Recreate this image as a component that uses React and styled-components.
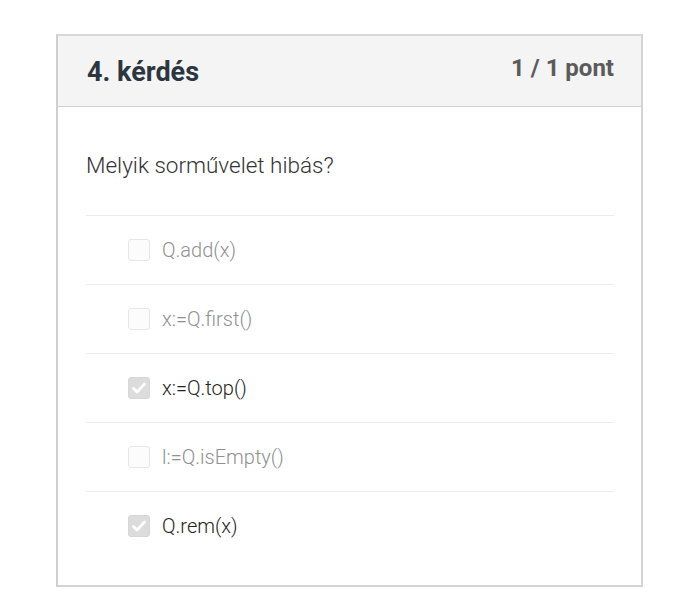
import styled, { createGlobalStyle } from 'styled-components';

const GlobalStyle = createGlobalStyle`
    body {
        margin: 0;
        background: #ffffff;
        font-family: Roboto, 'Liberation Sans', sans-serif;
    }
`;

const Page = styled.div`
    padding: 34px 0 0 56px;
`;

const Card = styled.div`
    width: 583px;
    height: 549px;
    border: 2px solid #d4d4d4;
    border-top-color: #d9d9d9;
    border-left-color: #cfcfcf;
    background: #ffffff;
    display: flex;
    flex-direction: column;
`;

const Header = styled.div`
    display: flex;
    justify-content: space-between;
    align-items: flex-start;
    height: 70px;
    background: #f4f4f4;
    border-bottom: 1px solid #d0d0d0;
    padding: 0 27px 0 29px;
`;

const Title = styled.h3`
    margin: 0;
    padding-top: 20px;
    font-size: 27px;
    font-weight: 700;
    color: #2c3641;
`;

const Points = styled.div`
    padding-top: 18px;
    font-size: 24px;
    font-weight: 700;
    color: #5b5b5b;
`;

const Body = styled.div`
    padding: 0 27px 0 28px;
`;

const Question = styled.p`
    margin: 0;
    padding: 44px 0 36px;
    font-size: 22.5px;
    font-weight: 300;
    color: #333;
    line-height: 28px;
`;

const Option = styled.label`
    display: flex;
    align-items: center;
    gap: 12px;
    height: 68px;
    border-top: 1px solid #ececec;
    padding-left: 42px;
    font-size: 20px;
    font-weight: 300;
    color: ${p => (p.checked ? '#222' : '#8f8f8f')};
`;

const Box = styled.span`
    width: 20px;
    height: 20px;
    border-radius: 3px;
    border: 1px solid ${p => (p.checked ? '#d6d6d6' : '#e6e6e6')};
    background: ${p => (p.checked ? '#dcdcdc' : '#fcfcfc')};
    display: flex;
    align-items: center;
    justify-content: center;
`;

const options = [
    { text: 'Q.add(x)', checked: false },
    { text: 'x:=Q.first()', checked: false },
    { text: 'x:=Q.top()', checked: true },
    { text: 'l:=Q.isEmpty()', checked: false },
    { text: 'Q.rem(x)', checked: true },
];

export default function App() {
    return (
        <Page>
            <GlobalStyle />
            <Card>
                <Header>
                    <Title>4. kérdés</Title>
                    <Points>1 / 1 pont</Points>
                </Header>
                <Body>
                    <Question>Melyik sorművelet hibás?</Question>
                    {options.map(o => (
                        <Option key={o.text} checked={o.checked}>
                            <Box checked={o.checked}>
                                {o.checked && (
                                    <svg width="16" height="16" viewBox="0 0 16 16">
                                        <path d="M2.5 8.5 L6 12 L13.5 4" fill="none" stroke="#ffffff" strokeWidth="2.8" strokeLinecap="round" strokeLinejoin="round" />
                                    </svg>
                                )}
                            </Box>
                            {o.text}
                        </Option>
                    ))}
                </Body>
            </Card>
        </Page>
    );
}
